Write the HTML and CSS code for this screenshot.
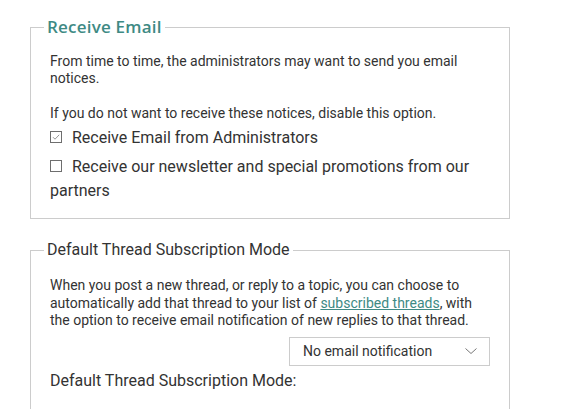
FILE: index.html
```html
<!DOCTYPE html>
<html>
<head>
<meta charset="utf-8">
<link rel="stylesheet" href="styles.css">
</head>
<body>
<div class="page">
  <fieldset class="group">
    <legend class="legend legend-accent">Receive Email</legend>
    <p class="desc">From time to time, the administrators may want to send you email notices.</p>
    <p class="desc desc-tight">If you do not want to receive these notices, disable this option.</p>
    <div class="check-row">
      <span class="box"><svg width="12" height="12" viewBox="0 0 12 12"><rect x="0.5" y="0.5" width="11" height="11" fill="none" stroke="#6e6e6e"/><path d="M3 6.2 L5 8.2 L9.2 3.8" fill="none" stroke="#8a8a8a" stroke-width="0.9"/></svg></span>Receive Email from Administrators
    </div>
    <div class="check-row">
      <span class="box"><svg width="12" height="12" viewBox="0 0 12 12"><rect x="0.5" y="0.5" width="11" height="11" fill="none" stroke="#6e6e6e"/></svg></span>Receive our newsletter and special promotions from our partners
    </div>
  </fieldset>
  <fieldset class="group group-last">
    <legend class="legend">Default Thread Subscription Mode</legend>
    <p class="desc desc-form">When you post a new thread, or reply to a topic, you can choose to automatically add that thread to your list of <a class="link" href="#">subscribed threads</a>, with the option to receive email notification of new replies to that thread.</p>
    <div class="select-row">
      <div class="select">
        <span>No email notification</span>
        <svg width="12" height="6" viewBox="0 0 12 6"><path d="M0.5 0.5 L6 5.5 L11.5 0.5" fill="none" stroke="#777" stroke-width="1"/></svg>
      </div>
    </div>
    <div class="field-label">Default Thread Subscription Mode:</div>
  </fieldset>
</div>
</body>
</html>
```

FILE: styles.css
```css
html, body {
  margin: 0;
  padding: 0;
  background: #fff;
}
body {
  font-family: Roboto, "Liberation Sans", sans-serif;
  color: #333;
}
.page {
  width: 480px;
  padding: 17px 0 0 30px;
}
.group {
  border: 1px solid #ccc;
  margin: 0 0 21px;
  padding: 16px 19px 15px;
  min-width: 0;
}
.group-last {
  padding-bottom: 40px;
}
.legend {
  font-size: 16px;
  line-height: 20px;
  padding: 0 3px;
  margin-left: -6px;
  color: #333;
}
.legend-accent {
  font-family: "Open Sans", sans-serif;
  font-size: 17px;
  font-weight: 600;
  letter-spacing: 0.2px;
  color: #3e8a84;
}
.desc {
  margin: 0 0 18px;
  font-size: 14px;
  line-height: 17px;
}
.desc-tight {
  margin-bottom: 4px;
}
.desc-form {
  margin-top: 1px;
  margin-bottom: 7px;
  line-height: 17.5px;
}
.check-row {
  font-size: 16px;
  line-height: 24px;
  margin-bottom: 5px;
}
.check-row:last-child {
  margin-bottom: 0;
}
.box {
  display: inline-block;
  vertical-align: 0;
  margin-right: 10px;
}
.box svg {
  display: block;
}
.link {
  color: #3e8a84;
  text-decoration: underline;
}
.select-row {
  display: flex;
  justify-content: flex-end;
}
.select {
  box-sizing: border-box;
  width: 201px;
  height: 29px;
  border: 1px solid #ccc;
  display: flex;
  align-items: center;
  justify-content: space-between;
  padding: 0 12px 0 13px;
  font-size: 14px;
  color: #333;
}
.field-label {
  margin-top: 3px;
  font-size: 16px;
  line-height: 24px;
}
```
